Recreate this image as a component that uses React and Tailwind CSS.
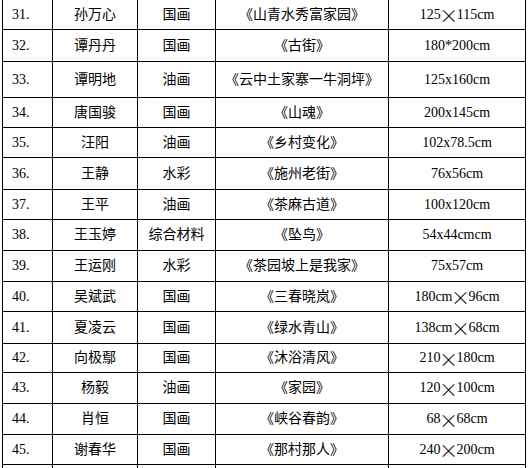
const rows = [
  { h: 'h-[30px]', n: '31.', name: '孙万心', kind: '国画', title: '《山青水秀富家园》', size: ['125', '×', '115cm'] },
  { h: 'h-[32px]', n: '32.', name: '谭丹丹', kind: '国画', title: '《古街》', size: ['180*200cm'] },
  { h: 'h-[36px]', n: '33.', name: '谭明地', kind: '油画', title: '《云中土家寨一牛洞坪》', size: ['125x160cm'] },
  { h: 'h-[30px]', n: '34.', name: '唐国骏', kind: '国画', title: '《山魂》', size: ['200x145cm'] },
  { h: 'h-[30px]', n: '35.', name: '汪阳', kind: '油画', title: '《乡村变化》', size: ['102x78.5cm'] },
  { h: 'h-[32px]', n: '36.', name: '王静', kind: '水彩', title: '《施州老街》', size: ['76x56cm'] },
  { h: 'h-[30px]', n: '37.', name: '王平', kind: '油画', title: '《茶麻古道》', size: ['100x120cm'] },
  { h: 'h-[31px]', n: '38.', name: '王玉婷', kind: '综合材料', title: '《坠鸟》', size: ['54x44cmcm'] },
  { h: 'h-[31px]', n: '39.', name: '王运刚', kind: '水彩', title: '《茶园坡上是我家》', size: ['75x57cm'] },
  { h: 'h-[30px]', n: '40.', name: '吴斌武', kind: '国画', title: '《三春晓岚》', size: ['180cm', '×', '96cm'] },
  { h: 'h-[32px]', n: '41.', name: '夏凌云', kind: '国画', title: '《绿水青山》', size: ['138cm', '×', '68cm'] },
  { h: 'h-[29px]', n: '42.', name: '向极鄢', kind: '国画', title: '《沐浴清风》', size: ['210', '×', '180cm'] },
  { h: 'h-[31px]', n: '43.', name: '杨毅', kind: '油画', title: '《家园》', size: ['120', '×', '100cm'] },
  { h: 'h-[31px]', n: '44.', name: '肖恒', kind: '国画', title: '《峡谷春韵》', size: ['68', '×', '68cm'] },
  { h: 'h-[30px]', n: '45.', name: '谢春华', kind: '国画', title: '《那村那人》', size: ['240', '×', '200cm'] },
  { h: 'h-[30px]', n: '', name: '', kind: '', title: '', size: [''] },
];

function Size({ parts }) {
  return (
    <span className="flex items-center whitespace-pre">
      {parts.map((p, i) =>
        p === '×' ? (
          <span
            key={i}
            className="flex w-[16px] justify-center text-[19px] font-extralight"
            style={{ fontFamily: '"Noto Sans CJK SC", sans-serif' }}
          >
            ×
          </span>
        ) : (
          <span key={i}>{p}</span>
        )
      )}
    </span>
  );
}

export default function App() {
  return (
    <div
      className="h-[468px] w-[528px] overflow-hidden bg-white text-[14px] leading-none text-black"
      style={{ fontFamily: '"Liberation Serif", "Noto Sans CJK SC", serif' }}
    >
      <div className="ml-[2px] w-[524px] border-l border-black">
        {rows.map((r, i) => (
          <div
            key={i}
            className={`grid grid-cols-[50px_85px_78px_173px_137px] border-b border-black ${r.h}`}
          >
            <div className="flex items-center border-r border-black pl-[9px]">{r.n}</div>
            <div className="flex items-center justify-center border-r border-black">{r.name}</div>
            <div className="flex items-center justify-center border-r border-black">{r.kind}</div>
            <div className="flex items-center justify-center border-r border-black">{r.title}</div>
            <div className="flex items-center justify-center border-r border-black">
              <Size parts={r.size} />
            </div>
          </div>
        ))}
      </div>
    </div>
  );
}
